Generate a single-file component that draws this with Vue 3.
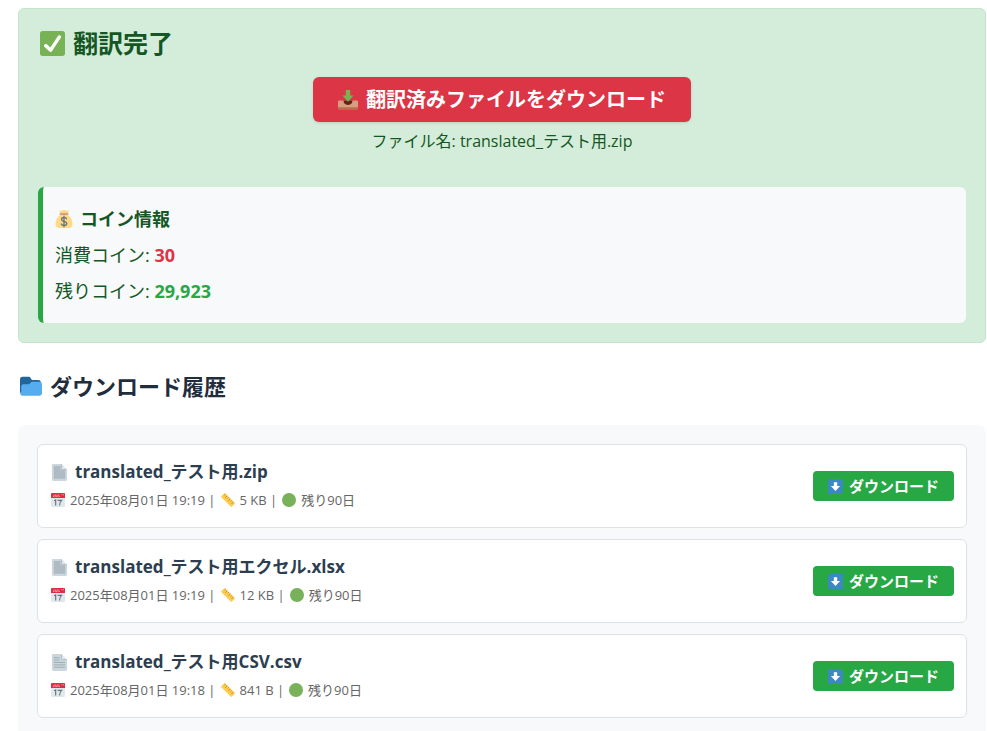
<script setup>
const coins = { used: '30', left: '29,923' }

const files = [
  { name: 'translated_テスト用.zip', date: '2025年08月01日 19:19', size: '5 KB', remain: '残り90日', lined: false },
  { name: 'translated_テスト用エクセル.xlsx', date: '2025年08月01日 19:19', size: '12 KB', remain: '残り90日', lined: false },
  { name: 'translated_テスト用CSV.csv', date: '2025年08月01日 19:18', size: '841 B', remain: '残り90日', lined: true },
]
</script>

<template>
  <main class="page">
    <section class="result">
      <h2 class="result-title">
        <svg class="icon" viewBox="0 0 36 36" aria-hidden="true">
          <rect width="36" height="36" rx="4" fill="#77b255" />
          <path fill="#fff" d="M29.28 6.362c-1.156-.751-2.704-.422-3.458.736L14.936 23.877l-5.029-4.65c-1.014-.938-2.596-.875-3.533.138-.937 1.014-.875 2.596.139 3.533l7.209 6.666c.48.445 1.09.665 1.696.665.673 0 1.534-.282 2.099-1.139.332-.506 12.5-19.27 12.5-19.27.751-1.159.421-2.707-.737-3.458z" />
        </svg>
        <span>翻訳完了</span>
      </h2>

      <div class="main-download">
        <button type="button" class="primary">
          <svg class="icon" viewBox="0 0 36 36" aria-hidden="true">
            <path fill="#d99e82" d="M2 19h32a2 2 0 0 1 2 2v12H0V21a2 2 0 0 1 2-2z" />
            <path fill="#c1694f" d="M0 31h36v3a2 2 0 0 1-2 2H2a2 2 0 0 1-2-2z" />
            <path fill="#662113" d="M10 19h16c0 4-2 8-8 8s-8-4-8-8z" />
            <path fill="#77b255" d="M14 0h8v10h6L18 21 8 10h6z" />
          </svg>
          <span>翻訳済みファイルをダウンロード</span>
        </button>
        <p class="file-name">ファイル名: translated_テスト用.zip</p>
      </div>

      <div class="coins">
        <h3 class="coins-title">
          <svg class="icon" viewBox="0 0 36 36" aria-hidden="true">
            <path fill="#ffd983" d="M11 9C5 14 1 20 1 27c0 6 3 9 8 9h18c5 0 8-3 8-9 0-7-4-13-10-18z" />
            <path fill="#ffd983" d="M11 7 9 1c0-1 1-1 3 0s3 0 4-1c1-1 3-1 4 0s3 2 5 1 3-1 3 0l-3 6z" />
            <rect x="9" y="6" width="18" height="4" rx="2" fill="#d99e82" />
            <path fill="none" stroke="#67757f" stroke-width="2.6" stroke-linecap="round" d="M23 17.500c-1-2-3-2.500-5-2.500-3 0-5 1.500-5 4 0 5.500 10.500 2.500 10.500 8 0 2.500-2.500 4-5.500 4-2.500 0-4.500-1-5.500-3M18 12.500v21" />
          </svg>
          <span>コイン情報</span>
        </h3>
        <p class="coin-row">消費コイン: <strong class="used">{{ coins.used }}</strong></p>
        <p class="coin-row">残りコイン: <strong class="left">{{ coins.left }}</strong></p>
      </div>
    </section>

    <h2 class="history-title">
      <svg class="icon" viewBox="0 0 36 36" aria-hidden="true">
        <path fill="#226699" d="M0 29V7a4 4 0 0 1 4-4h10c2 0 3 1 4 3s2 2 4 2h8a4 4 0 0 1 4 4v17z" />
        <path fill="#55acee" d="M32 11H20c-3 0-3 4-6 4H6a4 4 0 0 0-4 4v11l-2 0a4 4 0 0 0 4 4h28a4 4 0 0 0 4-4V15a4 4 0 0 0-4-4z" />
      </svg>
      <span>ダウンロード履歴</span>
    </h2>

    <section class="history">
      <article v-for="file in files" :key="file.name" class="card">
        <div class="info">
          <h3 class="card-title">
            <svg class="icon" viewBox="0 0 36 36" aria-hidden="true">
              <path fill="#ccd6dd" d="M4 0h18l12 12v21a3 3 0 0 1-3 3H5a3 3 0 0 1-3-3V2a2 2 0 0 1 2-2z" />
              <path v-if="!file.lined" fill="#aebbc5" d="M6 4h14v9h10v18H6z" />
              <path v-else fill="none" stroke="#99aab5" stroke-width="2" d="M6 8h12M6 13h12M6 18h24M6 23h24M6 28h24" />
              <path fill="#e1e8ed" d="M22 0l12 12H24a2 2 0 0 1-2-2z" />
              <path fill="none" stroke="#99aab5" stroke-width="1.500" d="M22 1v9a2 2 0 0 0 2 2h9" />
            </svg>
            <span>{{ file.name }}</span>
          </h3>
          <p class="meta">
            <svg class="icon" viewBox="0 0 36 36" aria-hidden="true">
              <path fill="#e1e8ed" d="M0 11h36v21a4 4 0 0 1-4 4H4a4 4 0 0 1-4-4z" />
              <path fill="#dd2e44" d="M2 0h32a2 2 0 0 1 2 2v11H0V2a2 2 0 0 1 2-2z" />
              <path fill="none" stroke="#f4abba" stroke-width="2" d="M5 9h3V4M12 4v5h4V4M20 4v5h3M28 3v3M32 3v3" />
              <path fill="none" stroke="#66757f" stroke-width="3" d="M8 20l4-2v14M17 19h10c-4 4-5 8-5 13" />
            </svg>
            <span>{{ file.date }} |</span>
            <svg class="icon" viewBox="0 0 36 36" aria-hidden="true">
              <path fill="#ffcc4d" d="M1 8 8 1c1-1 2-1 3 0l24 24c1 1 1 2 0 3l-7 7c-1 1-2 1-3 0L1 11c-1-1-1-2 0-3z" />
              <path fill="none" stroke="#a6792e" stroke-width="2" d="M12 3 9 6M16 7l-5 5M20 11l-3 3M24 15l-5 5M28 19l-3 3M32 23l-5 5" />
            </svg>
            <span>{{ file.size }} |</span>
            <svg class="icon" viewBox="0 0 36 36" aria-hidden="true">
              <circle cx="18" cy="18" r="18" fill="#78b159" />
            </svg>
            <span>{{ file.remain }}</span>
          </p>
        </div>
        <button type="button" class="download">
          <svg class="icon" viewBox="0 0 36 36" aria-hidden="true">
            <rect width="36" height="36" rx="3" fill="#3b88c3" />
            <path fill="#fff" d="M14 8h8v9h7L18 29 7 17h7z" />
          </svg>
          <span>ダウンロード</span>
        </button>
      </article>
    </section>
  </main>
</template>

<style>
body {
  margin: 0;
  background: #fff;
}
</style>

<style scoped>
.page {
  box-sizing: border-box;
  display: flex;
  flex-direction: column;
  min-height: 100vh;
  padding: 8px 1px 0 18px;
  font-family: "Open Sans", "Noto Sans CJK JP", sans-serif;
  font-size: 16px;
  color: #2c3e50;
}

h2,
h3,
p {
  margin: 0;
}

.icon {
  flex: none;
  width: 1em;
  height: 1em;
}

button {
  display: flex;
  align-items: center;
  justify-content: center;
  border: 0;
  color: #fff;
  font-family: inherit;
  font-weight: 700;
  white-space: nowrap;
  cursor: pointer;
}

.result {
  padding: 16px 19px 19px;
  border: 1px solid #c3e6cb;
  border-radius: 6px;
  background: #d4edda;
  color: #155724;
}

.result-title {
  display: flex;
  align-items: center;
  gap: 8px;
  padding-left: 2px;
  font-size: 25px;
  line-height: 36px;
}

.main-download {
  display: flex;
  flex-direction: column;
  align-items: center;
  gap: 7px;
  margin: 16px 0 34px;
}

.primary {
  gap: 8px;
  padding: 7px 25px 6px;
  border-radius: 6px;
  background: #dc3545;
  box-shadow: 0 1px 3px rgba(0, 0, 0, 0.12);
  font-size: 20px;
  line-height: 32px;
}

.file-name {
  font-size: 16px;
  line-height: 24px;
}

.coins {
  padding: 14px 12px;
  border-left: 5px solid #28a745;
  border-radius: 6px;
  background: #f8f9fb;
  font-size: 18px;
  line-height: 36px;
}

.coins-title {
  display: flex;
  align-items: center;
  gap: 7px;
  font-size: 18px;
}

.used {
  color: #dc3545;
}

.left {
  color: #28a745;
}

.history-title {
  display: flex;
  align-items: center;
  gap: 8px;
  padding: 26px 2px 22px;
  color: #1f2d3d;
  font-size: 22px;
  line-height: 34px;
}

.history {
  display: flex;
  flex: 1;
  flex-direction: column;
  gap: 11px;
  padding: 19px 19px 13px;
  border-radius: 8px 8px 0 0;
  background: #f8f9fb;
}

.card {
  display: flex;
  align-items: center;
  justify-content: space-between;
  padding: 12px 12px 12px 13px;
  border: 1px solid #dee2e6;
  border-radius: 6px;
  background: #fff;
}

.card-title {
  display: flex;
  align-items: center;
  gap: 7px;
  font-size: 17px;
  font-weight: 700;
  line-height: 30px;
}

.meta {
  display: flex;
  align-items: center;
  gap: 5px;
  padding-bottom: 2px;
  color: #666;
  font-size: 13px;
  line-height: 26px;
}

.meta .icon {
  width: 14px;
  height: 14px;
}

.download {
  gap: 6px;
  padding: 3px 15px;
  border-radius: 4px;
  background: #28a745;
  font-size: 15px;
  line-height: 24px;
}
</style>
